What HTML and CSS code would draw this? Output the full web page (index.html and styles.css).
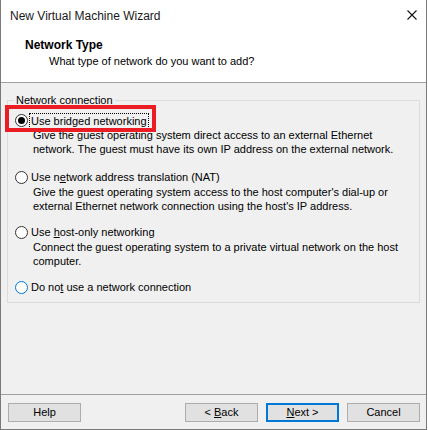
FILE: index.html
```html
<!DOCTYPE html>
<html>
<head>
<meta charset="utf-8">
<title>New Virtual Machine Wizard</title>
<link rel="stylesheet" href="styles.css">
</head>
<body>
<div class="window">
  <div class="titlebar">
    <span class="title">New Virtual Machine Wizard</span>
    <svg class="close" width="10" height="10" viewBox="0 0 10 10"><path d="M0.5 0.5 L9.5 9.5 M9.5 0.5 L0.5 9.5" stroke="#111" stroke-width="1.1" fill="none"/></svg>
  </div>
  <div class="header">
    <div class="h-title">Network Type</div>
    <div class="h-sub">What type of network do you want to add?</div>
  </div>
  <div class="content">
    <fieldset class="group">
      <legend>Network connection</legend>
      <div class="options">
        <div class="opt">
          <div class="opt-label"><span class="radio checked"></span><span class="focus">Use bridged networking</span></div>
          <div class="desc">Give the guest operating system direct access to an external Ethernet<br>network. The guest must have its own IP address on the external network.</div>
        </div>
        <div class="opt">
          <div class="opt-label"><span class="radio"></span><span>Use n<u>e</u>twork address translation (NAT)</span></div>
          <div class="desc">Give the guest operating system access to the host computer's dial-up or<br>external Ethernet network connection using the host's IP address.</div>
        </div>
        <div class="opt">
          <div class="opt-label"><span class="radio"></span><span>Use <u>h</u>ost-only networking</span></div>
          <div class="desc">Connect the guest operating system to a private virtual network on the host<br>computer.</div>
        </div>
        <div class="opt">
          <div class="opt-label"><span class="radio hover"></span><span>Do no<u>t</u> use a network connection</span></div>
        </div>
      </div>
    </fieldset>
  </div>
  <div class="footer">
    <button class="btn">Help</button>
    <div class="btn-group">
      <button class="btn">&lt; <u>B</u>ack</button>
      <button class="btn default"><u>N</u>ext &gt;</button>
      <button class="btn">Cancel</button>
    </div>
  </div>
  <div class="annot"></div>
</div>
</body>
</html>
```
FILE: styles.css
```css
html, body {
  margin: 0;
  padding: 0;
  background: #ffffff;
}
body {
  font-family: "Liberation Sans", Arial, sans-serif;
  font-size: 11px;
  color: #000;
}
.window {
  position: relative;
  width: 427px;
  height: 430px;
  box-sizing: border-box;
  border: 1px solid #7a7a7a;
  border-top: none;
  display: flex;
  flex-direction: column;
  background: #f0f0f0;
}
.titlebar {
  height: 31px;
  flex: none;
  display: flex;
  align-items: center;
  justify-content: space-between;
  background: #fff;
  padding: 0 9px;
  font-size: 12px;
  color: #1a1a1a;
}
.close {
  display: block;
  margin-top: -1px;
}
.header {
  height: 52px;
  flex: none;
  box-sizing: border-box;
  background: #fff;
  border-bottom: 1px solid #a0a0a0;
  padding: 7px 0 0 24px;
}
.h-title {
  font-weight: bold;
  font-size: 12px;
  line-height: 14px;
}
.h-sub {
  line-height: 14px;
  margin: 2px 0 0 24px;
}
.content {
  flex: 1;
  padding: 10px 6px 0 6px;
}
.group {
  margin: 0;
  padding: 0 0 7px 0;
  border: 1px solid #dcdcdc;
  min-width: 0;
}
.group legend {
  margin-left: 6px;
  padding: 0 2px;
  line-height: 15px;
}
.options {
  padding-top: 5px;
}
.opt {
  margin-bottom: 12px;
}
.opt:first-child {
  margin-bottom: 14px;
}
.opt:last-child {
  margin-bottom: 0;
}
.opt-label {
  display: flex;
  align-items: center;
  height: 15px;
  line-height: 15px;
  padding-left: 7px;
}
.radio {
  position: relative;
  width: 13px;
  height: 13px;
  box-sizing: border-box;
  border: 1px solid #333;
  border-radius: 50%;
  background: #fff;
  margin-right: 3px;
  flex: none;
}
.radio.checked::after {
  content: "";
  position: absolute;
  left: 2px;
  top: 2px;
  width: 7px;
  height: 7px;
  border-radius: 50%;
  background: #000;
}
.radio.hover {
  border-color: #0078d7;
}
.focus {
  outline: 1px dotted #000;
  margin-left: -1px;
  padding: 0 1px;
  line-height: 14px;
}
.desc {
  line-height: 14px;
  padding-left: 25px;
}
.footer {
  height: 35px;
  flex: none;
  box-sizing: border-box;
  border-top: 1px solid #a0a0a0;
  padding: 8px 6px 0 7px;
  display: flex;
  justify-content: space-between;
  align-items: flex-start;
}
.btn-group {
  display: flex;
  gap: 8px;
}
.btn {
  width: 73px;
  height: 19px;
  box-sizing: border-box;
  background: #e1e1e1;
  border: 1px solid #adadad;
  border-radius: 0;
  font-family: "Liberation Sans", Arial, sans-serif;
  font-size: 11px;
  color: #000;
  padding: 0;
  margin: 0;
  line-height: 15px;
}
.btn.default {
  border: 2px solid #0078d7;
}
.annot {
  position: absolute;
  left: 4px;
  top: 105px;
  width: 151px;
  height: 27px;
  box-sizing: border-box;
  border: 4px solid #ec1c24;
}
```
